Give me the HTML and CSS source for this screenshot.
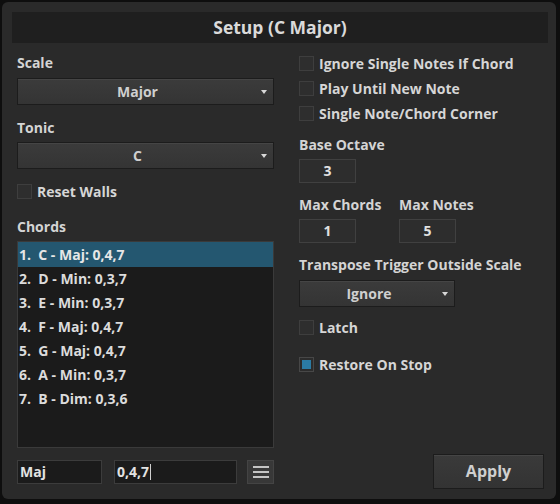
FILE: index.html
```html
<!DOCTYPE html>
<html>
<head>
<meta charset="utf-8">
<link rel="stylesheet" href="styles.css">
</head>
<body>
<div class="window">
  <div class="titlebar">Setup (C Major)</div>
  <div class="content">
    <div class="col-left">
      <div class="label first">Scale</div>
      <div class="dropdown wide"><span class="dd-text">Major</span><span class="arrow"></span></div>
      <div class="label">Tonic</div>
      <div class="dropdown wide"><span class="dd-text">C</span><span class="arrow"></span></div>
      <div class="check-row reset"><span class="box"></span><span>Reset Walls</span></div>
      <div class="label chords-label">Chords</div>
      <div class="list">
        <div class="row selected">1.  C - Maj: 0,4,7</div>
        <div class="row">2.  D - Min: 0,3,7</div>
        <div class="row">3.  E - Min: 0,3,7</div>
        <div class="row">4.  F - Maj: 0,4,7</div>
        <div class="row">5.  G - Maj: 0,4,7</div>
        <div class="row">6.  A - Min: 0,3,7</div>
        <div class="row">7.  B - Dim: 0,3,6</div>
      </div>
      <div class="bottom-row">
        <div class="text-input name">Maj</div>
        <div class="text-input notes">0,4,7<span class="caret"></span></div>
        <div class="menu-btn"><span></span><span></span><span></span></div>
      </div>
    </div>
    <div class="col-right">
      <div class="check-row top"><span class="box"></span><span>Ignore Single Notes If Chord</span></div>
      <div class="check-row"><span class="box"></span><span>Play Until New Note</span></div>
      <div class="check-row"><span class="box"></span><span>Single Note/Chord Corner</span></div>
      <div class="label octave-label">Base Octave</div>
      <div class="num-input">3</div>
      <div class="pair">
        <div class="pair-col">
          <div class="label">Max Chords</div>
          <div class="num-input">1</div>
        </div>
        <div class="pair-col">
          <div class="label">Max Notes</div>
          <div class="num-input">5</div>
        </div>
      </div>
      <div class="label transpose-label">Transpose Trigger Outside Scale</div>
      <div class="dropdown small"><span class="dd-text">Ignore</span><span class="arrow"></span></div>
      <div class="check-row latch"><span class="box"></span><span>Latch</span></div>
      <div class="check-row restore"><span class="box checked"></span><span>Restore On Stop</span></div>
      <div class="spacer"></div>
      <div class="apply-wrap"><div class="apply">Apply</div></div>
    </div>
  </div>
</div>
</body>
</html>
```
FILE: styles.css
```css
* { box-sizing: border-box; }
html, body {
  margin: 0;
  padding: 0;
  background: #0e0e0e;
  width: 560px;
  height: 504px;
  overflow: hidden;
}
body {
  font-family: "Open Sans", "DejaVu Sans", sans-serif;
  font-weight: 700;
  font-size: 14px;
  color: #d6d6d6;
}
.window {
  margin: 2px 4px 0 2px;
  width: 554px;
  height: 497px;
  background: #2a2a2a;
  border-radius: 6px;
  padding: 10px 8px 0 10px;
  display: flex;
  flex-direction: column;
}
.titlebar {
  height: 31px;
  background: #1f1f1f;
  text-align: center;
  font-size: 17.5px;
  line-height: 31px;
  color: #dadada;
}
.content {
  display: flex;
  flex: 1;
  padding-left: 5px;
}
.col-left {
  width: 257px;
  display: flex;
  flex-direction: column;
}
.col-right {
  margin-left: 25px;
  flex: 1;
  display: flex;
  flex-direction: column;
}
.label {
  height: 18px;
  line-height: 18px;
  margin-top: 14px;
  margin-bottom: 5px;
  color: #d4d4d4;
}
.label.first { margin-top: 11px; margin-bottom: 6px; }
.dropdown {
  height: 27px;
  border: 1px solid #1c1c1c;
  background: linear-gradient(#3b3b3b, #343434);
  box-shadow: inset 0 1px 0 #454545;
  display: flex;
  align-items: center;
  position: relative;
  color: #cfcfcf;
}
.dropdown.wide { width: 257px; }
.dropdown.small { width: 156px; height: 27px; }
.dd-text {
  flex: 1;
  text-align: center;
  padding-right: 4px;
}
.arrow {
  width: 0;
  height: 0;
  border-left: 3.5px solid transparent;
  border-right: 3.5px solid transparent;
  border-top: 4px solid #d8d8d8;
  margin-right: 6px;
}
.check-row {
  display: flex;
  align-items: center;
  height: 19px;
  margin-top: 6px;
}
.check-row.top { margin-top: 11px; }
.check-row.reset { margin-top: 13px; }
.box {
  width: 15px;
  height: 15px;
  border: 1px solid #3e3e3e;
  background: #2e2e2e;
  margin-right: 5px;
  flex: none;
}
.box.checked {
  border: 1px solid #474747;
  box-shadow: inset 0 0 0 2px #2c2c2c;
  background: #2b7ba4;
}
.chords-label { margin-top: 17px; margin-bottom: 5px; }
.list {
  width: 257px;
  height: 207px;
  border: 1px solid #3a3a3a;
  background: #1b1b1b;
}
.row {
  height: 24px;
  line-height: 24px;
  padding-left: 1px;
  white-space: pre;
  color: #dcdcdc;
}
.row.selected {
  background: #245770;
  height: 25px;
  line-height: 25px;
  color: #e6e6e6;
}
.bottom-row {
  display: flex;
  margin-top: 12px;
  height: 24px;
}
.text-input {
  height: 24px;
  background: #1b1b1b;
  border: 1px solid #3c3c3c;
  line-height: 22px;
  padding-left: 2px;
  color: #e2e2e2;
  display: flex;
  align-items: center;
}
.text-input.name { width: 85px; }
.text-input.notes { width: 123px; margin-left: 12px; }
.caret {
  width: 1px;
  height: 16px;
  background: #cfcfcf;
  margin-left: 1px;
}
.menu-btn {
  width: 27px;
  margin-left: 10px;
  background: #383838;
  border: 1px solid #444;
  display: flex;
  flex-direction: column;
  align-items: center;
  justify-content: center;
  gap: 3px;
}
.menu-btn span {
  width: 16px;
  height: 2px;
  background: #c4c4c4;
}
.octave-label { margin-top: 13px; margin-bottom: 5px; }
.num-input {
  width: 57px;
  height: 24px;
  background: #2d2d2d;
  border: 1px solid #404040;
  text-align: center;
  line-height: 22px;
  color: #e0e0e0;
}
.pair { display: flex; }
.pair-col { width: 100px; }
.pair-col .label { margin-top: 13px; margin-bottom: 5px; }
.transpose-label { margin-top: 13px; margin-bottom: 6px; }
.check-row.latch { margin-top: 11px; }
.check-row.restore { margin-top: 18px; }
.spacer { flex: 1; }
.apply-wrap {
  display: flex;
  justify-content: flex-end;
  padding-right: 4px;
  margin-bottom: 10px;
}
.apply {
  width: 111px;
  height: 35px;
  border: 1px solid #1c1c1c;
  background: linear-gradient(#3a3a3a, #333);
  box-shadow: inset 0 1px 0 #454545;
  text-align: center;
  line-height: 33px;
  font-size: 16px;
  color: #cfcfcf;
}
```
